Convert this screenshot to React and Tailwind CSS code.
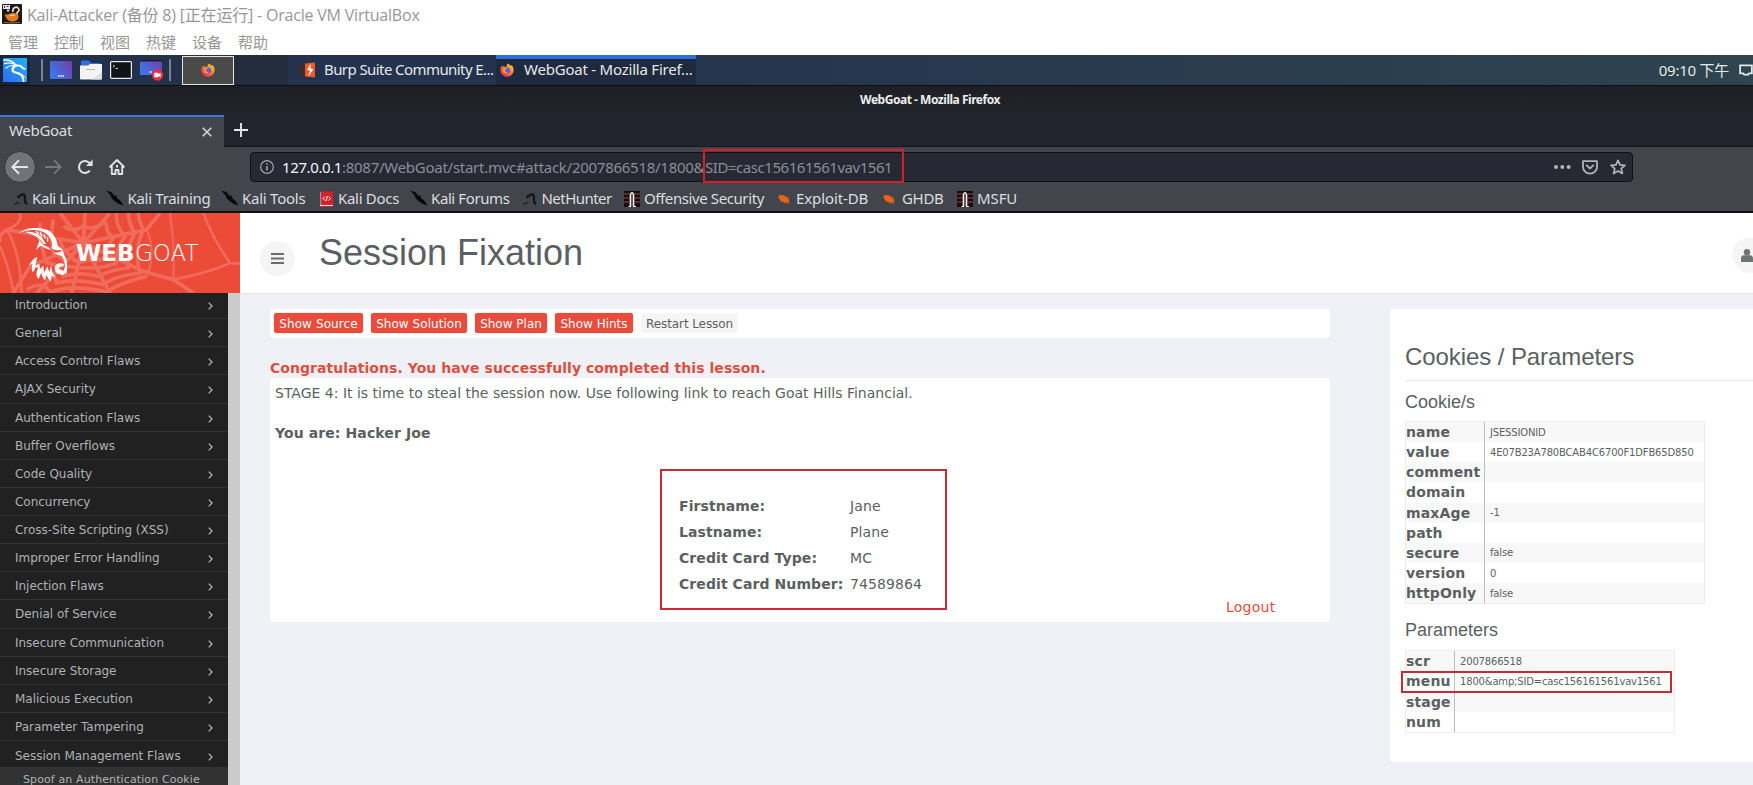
import React from 'react';

const UI = "font-['Noto_Sans','Noto_Sans_CJK_SC',sans-serif]";

const FirefoxIcon = ({ className }) => (
  <svg viewBox="0 0 16 16" className={className}>
    <defs>
      <linearGradient id="fx" x1="1" y1="0" x2="0.2" y2="1">
        <stop offset="0" stopColor="#ffe23c" />
        <stop offset="0.45" stopColor="#ff8a2a" />
        <stop offset="1" stopColor="#f0245c" />
      </linearGradient>
    </defs>
    <path d="M9.6 0.6c1 .6 1.6 1.6 1.8 2.5 1-.1 1.500-.2 2-.5C14.900 4.300 15.500 6 15.500 8.300c0 4.200-3.300 7.300-7.500 7.300S.5 12.400.5 8.300c0-2 .5-3.800 1.300-5.100l.7 1.400c.4-.8 1-1.300 1.400-1.800l.5 1.700c1.200-.2 2-.1 2.700.2.200-1.700 1-3.300 2.500-4.100z" fill="url(#fx)" />
    <circle cx="8" cy="8.600" r="3.400" fill="#6a4be0" />
    <path d="M4.300 5.600c1.800-.6 3.200 0 4.300 1-1.600 0-1.500 1.400-3 1.400 0 1.700 1.800 2.600 3.800 2 -1 2.500-5.600 2-6.300-1z" fill="#ff9640" />
    <circle cx="8.800" cy="7.800" r="1.800" fill="#3f6fe6" />
  </svg>
);

const KaliIcon = () => (
  <svg viewBox="0 0 24 24" className="h-6 w-6">
    <defs>
      <linearGradient id="kali" x1="0" y1="1" x2="1" y2="0">
        <stop offset="0" stopColor="#2a6cf0" />
        <stop offset="1" stopColor="#1fb2f5" />
      </linearGradient>
    </defs>
    <rect width="24" height="24" fill="url(#kali)" />
    <g fill="none" stroke="#fff" strokeLinecap="round" strokeLinejoin="round">
      <path d="M1 2.200C6 1.500 10 3.500 13 7.300" strokeWidth="1.400" />
      <path d="M1.500 5.600C6 4.300 10 5 13.300 7.500" strokeWidth="1.200" />
      <path d="M3 10C6 7.300 9 7 13 7.900" strokeWidth="1.200" />
      <path d="M13 7.600c2.500-.6 5.200.2 7.200 2.800l1.500.4" strokeWidth="1.900" />
      <path d="M13.300 7.800c-4.500 1-5 5.700-.8 6.700 4.500 1 7.500 2.200 8 8.500" strokeWidth="2.200" />
      <path d="M16.500 16c3 .2 5 2 6.500 4" strokeWidth="1" />
    </g>
  </svg>
);

const DesktopIcon = () => (
  <svg viewBox="0 0 22 18" className="h-[18px] w-[22px]">
    <defs>
      <linearGradient id="desk" x1="0" y1="0.500" x2="1" y2="0">
        <stop offset="0" stopColor="#3d74e8" />
        <stop offset="1" stopColor="#743ca8" />
      </linearGradient>
    </defs>
    <rect width="22" height="18" rx="1" fill="url(#desk)" />
    <path d="M8 15h1.500M10.300 15h1.500M12.600 15h1.500" stroke="#fff" strokeWidth="1.500" />
  </svg>
);

const FolderIcon = () => (
  <svg viewBox="0 0 22 20" className="h-5 w-[22px]">
    <path d="M1 9V1.500Q1 .5 2 .5h7l2 2.500h8q1.500 0 1.500 1.500V9z" fill="#2f6fe0" />
    <path d="M0 5.500h8l2-1.500h12v14.500q0 1-1 1H1q-1 0-1-1z" fill="#f4f4f4" />
    <path d="M6 9.500h9" stroke="#b5b5b5" strokeWidth="1" />
    <path d="M22 12v6.500q0 1-1 1h-9z" fill="#dedede" />
  </svg>
);

const TerminalIcon = () => (
  <svg viewBox="0 0 22 18" className="h-[18px] w-[22px]">
    <rect x=".6" y=".6" width="20.800" height="16.800" rx="1" fill="#111416" stroke="#e8e8e8" strokeWidth="1.200" />
    <path d="M3 4l1.500 1.200L3 6.400M5.500 7.500h2.500" stroke="#ddd" fill="none" strokeWidth=".9" />
  </svg>
);

const RecordIcon = () => (
  <svg viewBox="0 0 24 21" className="h-[21px] w-6">
    <rect width="22" height="15" fill="url(#desk)" />
    <path d="M0 .7h22" stroke="#161a2a" strokeWidth="1.400" />
    <path d="M9 12h3" stroke="#ddd" strokeWidth="1.300" />
    <circle cx="17.500" cy="15" r="5.700" fill="#e5303c" />
    <path d="M14.300 12.800h4v1.300l2.300-1.200v4.400l-2.300-1.200v1.200h-4z" fill="#fff" />
  </svg>
);

const BurpIcon = () => (
  <svg viewBox="0 0 16 16" className="h-4 w-4 shrink-0">
    <path d="M0 1l7 1v12l-7 1z" fill="#3b2d2e" />
    <path d="M6 1.500l10-1v15l-10-1z" fill="#f0592c" />
    <path d="M11.500 2.500L8.500 7.500l3 1L9.500 13.500l4.500-6-3-1z" stroke="#fff" strokeWidth=".5" fill="#fff" />
  </svg>
);

const VmIcon = () => (
  <svg viewBox="0 0 20 20" className="h-5 w-5">
    <rect width="20" height="20" rx="1" fill="#1c1815" />
    <rect x="1" y="1" width="7" height="4" fill="#e8e8e8" />
    <path d="M2.500 2v2M4.500 2.500h2" stroke="#222" strokeWidth=".9" />
    <path d="M5 6.500h2.500M6 5v3" stroke="#ddd" strokeWidth="1" />
    <path d="M11 8c-1-4 3-6 5-4s1 3-.5 4l-1 3" fill="none" stroke="#e6e0d8" strokeWidth="1.700" />
    <path d="M3 10c3 1.500 5-1 8-1 4 0 6 2 5.500 4.500C16 16.500 13 18 9.500 17.500 6 17 3 14 3 10z" fill="#e87818" />
    <path d="M7 12c2-2 5-2 7 0-2-.5-5 .5-7 0z" fill="#ffd08a" />
    <path d="M2 18.500q8 1 16 0" stroke="#777" strokeWidth="1" fill="none" />
  </svg>
);

const marks = {
  dragon: (
    <svg viewBox="0 0 14 12" className="h-3 w-[14px]">
      <path d="M0 11.300l3-1.300h2.500" stroke="#202226" strokeWidth="1.500" fill="none" />
      <path d="M3.500 4.500L7 2c2.500-1.500 4-.5 4 2.500S10 9 13 11.200" stroke="#121417" strokeWidth="2.300" fill="none" />
    </svg>
  ),
  knife: (
    <svg viewBox="0 0 16 15" className="h-[15px] w-4">
      <path d="M0 0l4.500 1.500L7 5l2-.3 1 3 2.500 1.600L16 14l-4.500-1.500L8 10 5 7.300 4 4.500z" fill="#08090a" stroke="#08090a" strokeWidth=".7" />
    </svg>
  ),
  docs: (
    <svg viewBox="0 0 13 16" className="h-4 w-[13px]">
      <rect y=".5" width="13" height="15" rx="1" fill="#d81f26" />
      <path d="M.7 1v14" stroke="#8fa9d8" strokeWidth=".9" />
      <path d="M0 14.500h13" stroke="#f3c9cb" strokeWidth="1.200" />
      <path d="M5 5.500L3 7.500l2 2M8.500 5.500l2 2-2 2M7.400 5L6.200 10" stroke="#fff" fill="none" strokeWidth="1" />
    </svg>
  ),
  offsec: (
    <svg viewBox="0 0 16 16" className="h-4 w-4">
      <rect width="16" height="16" fill="#1a0a0c" />
      <path d="M0 3h5M11 3h5M0 7h5M11 7h5M0 11h5M11 11h5" stroke="#6e3a36" strokeWidth="1.400" />
      <path d="M6.500 15.500V3.500Q8 0 9.500 3.500v12" fill="none" stroke="#f0f0f0" strokeWidth="1.700" />
      <path d="M4.500 15.500h2.500M9 15.500h3" stroke="#f0f0f0" strokeWidth="1" />
    </svg>
  ),
  bug: (
    <svg viewBox="0 0 14 12" className="h-3 w-[14px]">
      <ellipse cx="7" cy="6" rx="5.800" ry="3.200" transform="rotate(28 7 6)" fill="#ec6316" />
      <path d="M.8 4l3 .5M2 1.500L4 3.500M3 8.500l2-1M11 5l1-1.500M12.500 11L10.500 9M8 10.500L7.500 9" stroke="#ec6316" strokeWidth=".7" />
    </svg>
  ),
};

// [icon, label, slot width, icon-to-text offset, letter spacing]
const bookmarks = [
  ['dragon', 'Kali Linux', 'w-[93px]', 'w-[18px]', 'tracking-[-0.4px]'],
  ['knife', 'Kali Training', 'w-[115px]', 'w-[20.500px]', 'tracking-[-0.3px]'],
  ['knife', 'Kali Tools', 'w-[98px]', 'w-[20px]', 'tracking-[-0.25px]'],
  ['docs', 'Kali Docs', 'w-[91px]', 'w-[18px]', 'tracking-[-0.3px]'],
  ['knife', 'Kali Forums', 'w-[112px]', 'w-[20px]', 'tracking-[-0.4px]'],
  ['dragon', 'NetHunter', 'w-[101px]', 'w-[18.5px]', 'tracking-[-0.55px]'],
  ['offsec', 'Offensive Security', 'w-[153px]', 'w-[20px]', 'tracking-[-0.4px]'],
  ['bug', 'Exploit-DB', 'w-[105px]', 'w-[19px]', 'tracking-[-0.1px]'],
  ['bug', 'GHDB', 'w-[75px]', 'w-[20px]', 'tracking-[-0.3px]'],
  ['offsec', 'MSFU', 'w-[70px]', 'w-[20px]', 'tracking-[-0.1px]'],
];

const navItems = [
  'Introduction', 'General', 'Access Control Flaws', 'AJAX Security', 'Authentication Flaws',
  'Buffer Overflows', 'Code Quality', 'Concurrency', 'Cross-Site Scripting (XSS)',
  'Improper Error Handling', 'Injection Flaws', 'Denial of Service', 'Insecure Communication',
  'Insecure Storage', 'Malicious Execution', 'Parameter Tampering', 'Session Management Flaws',
];

const cookieRows = [
  ['name', 'JSESSIONID'], ['value', '4E07B23A780BCAB4C6700F1DFB65D850'], ['comment', ''],
  ['domain', ''], ['maxAge', '-1'], ['path', ''], ['secure', 'false'], ['version', '0'], ['httpOnly', 'false'],
];
const paramRows = [
  ['scr', '2007866518'], ['menu', '1800&amp;SID=casc156161561vav1561'], ['stage', ''], ['num', ''],
];

const account = [
  ['Firstname:', 'Jane'], ['Lastname:', 'Plane'],
  ['Credit Card Type:', 'MC'], ['Credit Card Number:', '74589864'],
];

function VmChrome() {
  return (
    <div className="h-[55px] bg-white text-[#979797]">
      <div className="flex h-[28px] items-center pl-[2px]">
        <VmIcon />
        <span className="ml-[5px] whitespace-pre pt-px text-[16px] tracking-[-0.2px] font-['Open_Sans','Noto_Sans_CJK_SC',sans-serif]">Kali-Attacker (备份 8) [正在运行] - Oracle VM VirtualBox</span>
      </div>
      <div className="flex h-[27px] items-center gap-4 pl-2 text-[15px] font-normal leading-none font-['Noto_Sans_CJK_SC',sans-serif]">
        {['管理', '控制', '视图', '热键', '设备', '帮助'].map((t) => <span key={t}>{t}</span>)}
      </div>
    </div>
  );
}

function Taskbar() {
  return (
    <div className="flex h-[31px] items-center border-b border-[#0b1017] bg-gradient-to-r from-[#233049] via-[#27374e] to-[#2e444e] text-[15px] text-[#e6e8ea]">
      <div className="flex h-full w-[30px] items-center bg-[#1b2438] pl-[3px]"><KaliIcon /></div>
      <div className="ml-[11px] h-[22px] w-[2px] bg-[#7c8291]" />
      <div className="ml-[7px] flex h-full items-center gap-2">
        <DesktopIcon />
        <FolderIcon />
        <TerminalIcon />
        <RecordIcon />
      </div>
      <div className="ml-[5px] h-[22px] w-[2px] bg-[#7c8291]" />
      <div className="ml-[11px] flex h-[29px] w-[52px] items-center justify-center border border-[#e4e4e4] bg-[#4a4a48]">
        <FirefoxIcon className="h-[14px] w-[14px]" />
      </div>
      <div className="h-full w-[54px] bg-[#242d3d]" />
      <div className="flex h-full w-[208px] items-center bg-[#24334d] pl-[11px]">
        <BurpIcon />
        <span className="ml-[9px] whitespace-nowrap pb-px tracking-[-0.58px]">Burp Suite Community E...</span>
      </div>
      <div className="flex h-full w-[200px] items-center border-t-4 border-[#2c6fe0] bg-[#1f2a3e] pb-[5px] pl-1">
        <FirefoxIcon className="h-[14px] w-[14px]" />
        <span className="ml-[10px] whitespace-nowrap tracking-[-0.22px]">WebGoat - Mozilla Firef...</span>
      </div>
      <span className="ml-auto whitespace-nowrap tracking-[-0.25px]">09:10 下午</span>
      <svg viewBox="0 0 15 14" className="ml-2.5 h-[14px] w-[14px] shrink-0">
        <path d="M1.200 2h12.600v8.500h-3l-1 1.500H5.500l-1-1.500H1.200z" fill="none" stroke="#e6e8ea" strokeWidth="1.900" />
      </svg>
    </div>
  );
}

function Browser() {
  return (
    <div className="text-[15px] text-[#dcdee0]">
      <div className="flex h-[29px] items-center justify-center bg-gradient-to-b from-[#1d1f24] to-[#22252d] pb-px pl-[107px] text-[12px] font-bold tracking-[-0.47px] text-[#eeeeee]">
        WebGoat - Mozilla Firefox
      </div>
      <div className="flex h-[32px] border-b border-[#14161a] bg-[#22252d]">
        <div className="flex h-[32px] w-[224px] items-center border-t-2 border-[#3b74dc] bg-[#42454b] pl-[9px] pr-3">
          <span className="pb-[3px] tracking-[-0.3px]">WebGoat</span>
          <svg viewBox="0 0 10 10" className="ml-auto h-[10px] w-[10px]"><path d="M.7.7l8.600 8.600M9.300.7L.7 9.300" stroke="#d5d6d8" strokeWidth="1.600" /></svg>
        </div>
        <svg viewBox="0 0 14 14" className="ml-[10px] mt-2 h-[14px] w-[14px]"><path d="M7 0v14M0 7h14" stroke="#e8e8ea" strokeWidth="1.900" /></svg>
      </div>
      <div className="flex h-[40px] items-center bg-[#42454b] pl-1">
        <div className="flex h-8 w-8 items-center justify-center rounded-full border border-[#33363b] bg-[#717378]">
          <svg viewBox="0 0 18 16" className="h-4 w-[18px]"><path d="M17 8H1.500M8 1.200L1.400 8 8 14.800" fill="none" stroke="#e6e6e8" strokeWidth="2" /></svg>
        </div>
        <svg viewBox="0 0 18 16" className="ml-2 h-4 w-[18px]"><path d="M1 8h15.500M10 1.200L16.600 8 10 14.800" fill="none" stroke="#74777c" strokeWidth="1.900" /></svg>
        <svg viewBox="0 0 16 16" className="ml-[15px] h-4 w-4"><path d="M12.800 11.500A6 6 0 1 1 12.500 4" fill="none" stroke="#e0e1e3" strokeWidth="2.100" /><path d="M15.600.5v6.600H9z" fill="#e0e1e3" /></svg>
        <svg viewBox="0 0 16 16" className="ml-4 h-4 w-4"><path d="M.5 8.300L8 1l7.500 7.300M2.800 7v8h3.700v-4h3v4h3.700V7" fill="none" stroke="#e0e1e3" strokeWidth="1.900" strokeLinejoin="round" /><path d="M8 6v2.500" stroke="#e0e1e3" strokeWidth="2" /></svg>
        <div className="relative ml-[125px] flex h-[30px] w-[1383px] items-center rounded-[4px] border border-[#0e1015] bg-[#262833] pl-[9px] pr-[6px]">
          <svg viewBox="0 0 14 14" className="h-[14px] w-[14px]"><circle cx="7" cy="7" r="6.300" fill="none" stroke="#a4a6ac" strokeWidth="1.200" /><path d="M7 6v4.500M7 3.300v1.500" stroke="#a4a6ac" strokeWidth="1.600" /></svg>
          <span className="ml-[8px] w-[60px] whitespace-nowrap tracking-[-0.39px] text-[#f6f6f8]">127.0.0.1</span>
          <span className="w-[363px] whitespace-nowrap tracking-[-0.27px] text-[#8c8e97]">:8087/WebGoat/start.mvc#attack/2007866518/1800&amp;</span>
          <span className="whitespace-nowrap tracking-[-0.45px] text-[#8c8e97]">SID=casc156161561vav1561</span>
          <svg viewBox="0 0 17 4" className="ml-auto h-1 w-[17px]"><circle cx="2" cy="2" r="2" fill="#b2b4b9" /><circle cx="8.300" cy="2" r="2" fill="#b2b4b9" /><circle cx="14.600" cy="2" r="2" fill="#b2b4b9" /></svg>
          <svg viewBox="0 0 16 15" className="ml-[11px] h-[15px] w-4"><path d="M1 1.200h14v5.500a7 7 0 0 1-14 0z" fill="none" stroke="#b2b4b9" strokeWidth="1.800" strokeLinejoin="round" /><path d="M4.700 5.300L8 8.500l3.300-3.200" fill="none" stroke="#b2b4b9" strokeWidth="1.800" strokeLinecap="round" /></svg>
          <svg viewBox="0 0 16 16" className="ml-3 h-4 w-4"><path d="M8 1.300l2 4.600 5 .4-3.800 3.300 1.200 4.900L8 11.900l-4.400 2.600 1.200-4.900L1 6.300l5-.4z" fill="none" stroke="#b2b4b9" strokeWidth="1.700" strokeLinejoin="round" /></svg>
          <div className="absolute -top-[4px] left-[452px] h-[34px] w-[201px] border-2 border-[#d0202b]" />
        </div>
      </div>
      <div className="flex h-[26px] items-center border-b-2 border-[#0f1012] bg-[#42454b] pl-[14px] pb-[1px]">
        {bookmarks.map(([icon, label, slot, gap, track]) => (
          <div key={label} className={`flex shrink-0 items-center whitespace-nowrap ${slot}`}>
            <span className={`flex h-4 shrink-0 items-center ${gap}`}>{marks[icon]}</span>
            <span className={track}>{label}</span>
          </div>
        ))}
      </div>
    </div>
  );
}

function Logo() {
  return (
    <div className="relative h-[80px] w-[240px] bg-[#ec4b38]">
      <svg viewBox="0 0 720 240" className="h-full w-full">
        <g fill="none" stroke="#f06b5b" strokeWidth="11">
          <path d="M250 90L180 0M250 90L20 50 0 65M250 90L90 160 40 240M250 90L110 240M250 90L215 240M250 90L330 240M250 90L430 175 520 200 580 240M250 90L440 50 480 0M250 90L330 0M250 90L255 0" strokeWidth="11" />
          <path d="M520 200Q640 175 690 150L720 152M690 150Q640 80 610 0" strokeWidth="8" />
          <path d="M520 200Q525 100 510 0M440 190Q470 120 440 50" strokeWidth="6" />
          <path d="M60 0Q70 30 20 50Q0 60 0 90M20 50Q60 110 65 240M0 100Q30 170 40 240" strokeWidth="8" />
          <path d="M190 40Q220 60 250 40Q285 55 320 20M180 80Q190 120 210 125Q230 160 265 140Q300 150 325 125Q320 100 340 75Q315 55 320 30" />
          <path d="M160 20Q150 70 160 120Q190 130 200 160Q240 165 280 165Q310 165 350 150Q345 110 375 70Q345 35 350 0" />
          <path d="M120 30Q120 100 140 150Q180 150 190 190Q240 175 295 190Q330 170 385 165Q375 110 405 60Q385 30 385 0" />
          <path d="M110 180Q160 170 170 210Q230 195 310 215Q340 190 420 180Q400 110 430 50Q415 20 415 0" />
          <path d="M80 230Q130 200 150 238Q210 212 320 236Q370 205 440 190" />
        </g>
        <g fill="#fff">
          <path d="M56 60Q74 46 100 45Q134 43 152 56Q168 70 174 98L188 110Q178 114 164 110L154 106Q160 90 150 74Q138 56 112 52Q84 48 56 60z" />
          <path d="M76 57Q104 54 124 72L138 92 132 94Q112 66 76 57zM110 72L118 84 108 110 122 98 134 104 152 112 148 104 130 96z" />
          <path d="M108 54l8 10M120 58l6 12M132 64l3 12M142 74l1 12" stroke="#fff" strokeWidth="4" />
          <path d="M188 110Q192 126 198 136Q204 156 200 180L188 186 172 182Q160 172 166 158Q176 146 192 154L190 160Q178 158 176 168L190 174 194 164Q198 150 186 130L160 120 180 118z" />
          <path d="M112 132Q98 136 88 156L98 152Q92 168 99 178L108 162 114 164Q104 190 116 198L124 178Q126 196 136 202L138 186 152 206 155 188 168 194Q152 176 154 152L148 178 142 160 132 180 130 158 120 168 118 152 106 158z" />
        </g>
      </svg>
      <div className="absolute inset-y-0 left-[76px] flex items-center whitespace-nowrap pt-px text-[23px] text-white font-['DejaVu_Sans',sans-serif]">
        <span className="w-[59px] font-bold">WEB</span>
        <span className="font-extralight">GOAT</span>
      </div>
    </div>
  );
}

function Sidebar() {
  return (
    <div className="flex w-[240px] shrink-0 flex-col">
      <Logo />
      <div className="flex min-h-0 flex-1">
        <div className="flex w-[228px] flex-col justify-end overflow-hidden bg-[#212121] text-[12px] tracking-[-0.02px] text-[#aeb2b7]">
          {navItems.map((t, i) => (
            <div key={t} className={`flex shrink-0 items-center justify-between pl-[15px] pr-[15px] ${i < navItems.length - 1 ? 'h-[28.140px] border-b border-[#323232]' : 'h-[26px] pt-[2px]'}`}>
              <span className="pt-px">{t}</span>
              <svg viewBox="0 0 5 8" className="mt-[3px] h-2 w-[5px]"><path d="M.7.7L4 4 .7 7.300" fill="none" stroke="#b8bcc0" strokeWidth="1.200" /></svg>
            </div>
          ))}
          <div className="h-[18px] shrink-0 overflow-hidden bg-[#323232] pl-[23px] text-[11px] leading-[26px] tracking-[0.11px]">Spoof an Authentication Cookie</div>
        </div>
        <div className="w-3 bg-[#cbcbcb]" />
      </div>
    </div>
  );
}

const redBtn = 'flex h-5 items-center justify-center rounded-[3px] bg-[#e74c3c] pt-px text-white shadow-[0_0_1px_#c9402f]';

function PropTable({ rows, width, label }) {
  return (
    <div className={`border border-[#ededed] ${width}`}>
      {rows.map(([k, v], i) => (
        <div key={k} className={`flex h-[20.150px] items-center ${i % 2 ? 'bg-white' : 'bg-[#f8f8f8]'}`}>
          <div className={`flex h-full items-center border-r border-[#bdbdbd] text-[14px] font-bold leading-none tracking-[0.15px] ${label}`}>{k}</div>
          <div className="whitespace-nowrap pl-[5px] text-[10px] tracking-[-0.17px]">{v}</div>
        </div>
      ))}
    </div>
  );
}

function Lesson() {
  return (
    <div className="w-[1060px] shrink-0">
      <div className="flex h-[29px] items-start rounded-[3px] bg-white pl-1 pt-1 text-[12px]">
        <div className={`${redBtn} w-[89px] tracking-[0.1px]`}>Show Source</div>
        <div className={`${redBtn} ml-2 w-[96px] tracking-[0.05px]`}>Show Solution</div>
        <div className={`${redBtn} ml-2 w-[72px]`}>Show Plan</div>
        <div className={`${redBtn} ml-2 w-[78px]`}>Show Hints</div>
        <div className="ml-2 flex h-5 w-[97px] items-center justify-center rounded-[3px] bg-[#f5f5f5] pt-px tracking-[-0.09px]">Restart Lesson</div>
      </div>
      <div className="mt-5 h-5 text-[14px] font-bold leading-5 tracking-[0.06px] text-[#de4f42]">Congratulations. You have successfully completed this lesson.</div>
      <div className="flex h-[244px] flex-col rounded-[3px] bg-white px-[5px] pt-[5px] text-[14px]">
        <div className="h-5 leading-5">STAGE 4: It is time to steal the session now. Use following link to reach Goat Hills Financial.</div>
        <div className="mt-5 h-5 font-bold leading-5 tracking-[0.1px]">You are: Hacker Joe</div>
        <div className="flex">
          <div className="ml-[385px] mt-[26px] h-[141px] w-[287px] border-2 border-[#cb2a35] pl-[17px] pt-[22px]">
            {account.map(([k, v]) => (
              <div key={k} className="flex h-[26px] items-center whitespace-nowrap">
                <span className="w-[171px] font-bold tracking-[0.08px]">{k}</span>
                <span className="tracking-[0.1px]">{v}</span>
              </div>
            ))}
          </div>
          <span className="ml-[279px] mt-[154px] leading-5 tracking-[0.25px] text-[#de4f42]">Logout</span>
        </div>
      </div>
    </div>
  );
}

const H = "font-['Liberation_Sans',sans-serif]";

function CookiePanel() {
  return (
    <div className="ml-[60px] h-[453px] w-[420px] shrink-0 rounded-[3px] bg-white px-[15px] pt-[33px]">
      <div className={`h-[39px] border-b border-[#e8e8e8] text-[24px] leading-[30px] tracking-[-0.08px] ${H}`}>Cookies / Parameters</div>
      <div className={`mt-[10px] text-[18px] leading-[22px] ${H}`}>Cookie/s</div>
      <div className="mt-2"><PropTable rows={cookieRows} width="w-[300px]" label="w-[79px]" /></div>
      <div className={`mt-[15px] text-[18px] leading-[22px] ${H}`}>Parameters</div>
      <div className="relative mt-[9px]">
        <PropTable rows={paramRows} width="w-[270px]" label="w-[49px]" />
        <div className="absolute -left-[4px] top-[20.5px] h-[22px] w-[271px] border-2 border-[#c62a33]" />
      </div>
    </div>
  );
}

export default function App() {
  return (
    <div className={`flex h-[785px] w-[1753px] flex-col overflow-hidden bg-white ${UI}`}>
      <VmChrome />
      <Taskbar />
      <Browser />
      <div className="flex min-h-0 flex-1 bg-[#f0f1f7] text-[#5b5f61] font-['DejaVu_Sans',sans-serif]">
        <Sidebar />
        <div className="flex min-w-0 flex-1 flex-col overflow-hidden">
          <div className="flex h-[81px] shrink-0 items-start border-b border-[#e4e5ea] bg-white pl-5">
            <div className="mt-7 flex h-[35px] w-[35px] shrink-0 items-center justify-center rounded-full bg-[#f5f5f5]">
              <svg viewBox="0 0 13 11" className="h-[11px] w-[13px]"><path d="M0 1h13M0 5.500h13M0 10h13" stroke="#6a6d6e" strokeWidth="1.900" /></svg>
            </div>
            <div className={`ml-[24px] mt-[20px] text-[36px] leading-[40px] ${H}`}>Session Fixation</div>
            <div className="-mr-4 ml-auto mt-[25px] flex h-[35px] w-[37px] shrink-0 items-center rounded-full bg-[#f5f5f5] pl-[9px]">
              <svg viewBox="0 0 12 13" className="h-[13px] w-3"><circle cx="6" cy="3.200" r="3.200" fill="#707475" /><path d="M0 13V9.500Q0 6.500 2.800 6.300h6.400Q12 6.500 12 9.500V13z" fill="#707475" /></svg>
            </div>
          </div>
          <div className="flex pl-[30px] pt-[15px]">
            <Lesson />
            <CookiePanel />
          </div>
        </div>
      </div>
    </div>
  );
}
